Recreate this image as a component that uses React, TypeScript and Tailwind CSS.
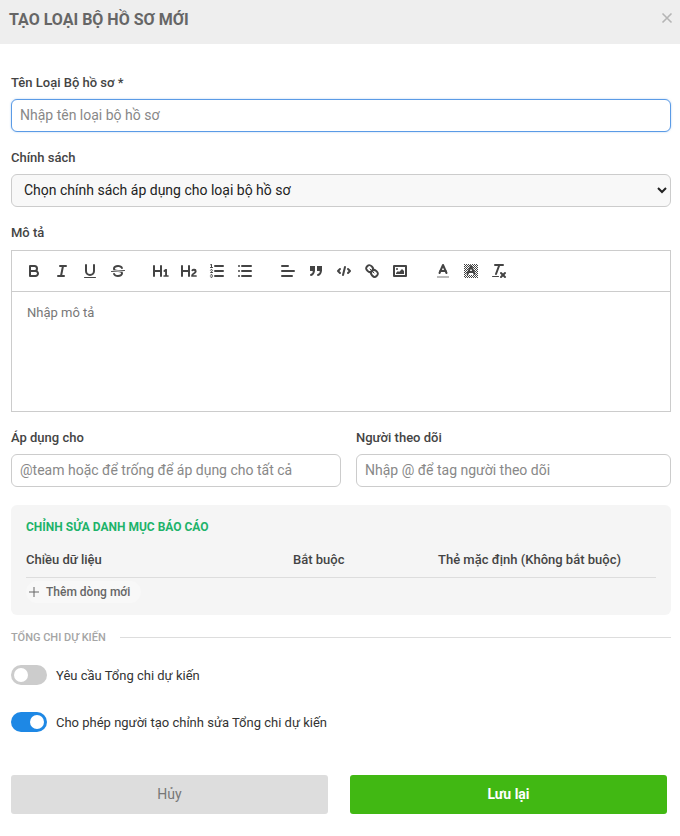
import React from "react";

const S = "none";
const stroke = { fill: "none", stroke: "#444", strokeWidth: 2, strokeLinecap: "round" as const, strokeLinejoin: "round" as const };

function Btn({ children }: { children: React.ReactNode }) {
  return (
    <span className="flex h-6 w-7 items-center justify-center">
      <svg viewBox="0 0 18 18" className="h-[18px] w-[18px]" fill={S}>
        {children}
      </svg>
    </span>
  );
}

function Toolbar() {
  return (
    <div className="flex h-[41px] items-center border-b border-[#ccc] p-2">
      <div className="mr-[15px] flex">
        <Btn>
          <path {...stroke} d="M5,4H9.5A2.5,2.5,0,0,1,12,6.5v0A2.5,2.5,0,0,1,9.5,9H5A0,0,0,0,1,5,9V4A0,0,0,0,1,5,4Z" />
          <path {...stroke} d="M5,9h5.5A2.5,2.5,0,0,1,13,11.5v0A2.5,2.5,0,0,1,10.5,14H5a0,0,0,0,1,0,0V9A0,0,0,0,1,5,9Z" />
        </Btn>
        <Btn>
          <line {...stroke} x1="7" x2="13" y1="4" y2="4" />
          <line {...stroke} x1="5" x2="11" y1="14" y2="14" />
          <line {...stroke} x1="8" x2="10" y1="14" y2="4" />
        </Btn>
        <Btn>
          <path {...stroke} d="M5,3V9a4.012,4.012,0,0,0,4,4H9a4.012,4.012,0,0,0,4-4V3" />
          <rect fill="#444" height="1" rx=".5" ry=".5" width="12" x="3" y="15" />
        </Btn>
        <Btn>
          <line {...stroke} strokeWidth={1} x1="15.5" x2="2.5" y1="8.5" y2="9.5" />
          <path fill="#444" d="M9.007,8C6.542,7.791,6,7.519,6,6.5,6,5.792,7.283,5,9,5c1.571,0,2.765.679,2.969,1.309a1,1,0,0,0,1.9-.617C13.356,4.106,11.354,3,9,3,6.2,3,4,4.538,4,6.5a3.2,3.2,0,0,0,.5,1.843Z" />
          <path fill="#444" d="M8.984,10C11.457,10.208,12,10.479,12,11.5c0,.708-1.283,1.5-3,1.5-1.571,0-2.765-.679-2.969-1.309a1,1,0,1,0-1.9.617C4.644,13.894,6.646,15,9,15c2.8,0,5-1.538,5-3.5a3.2,3.2,0,0,0-.5-1.843Z" />
        </Btn>
      </div>
      <div className="mr-[15px] flex">
        <Btn>
          <path fill="#444" d="M10,4V14a1,1,0,0,1-2,0V10H3v4a1,1,0,0,1-2,0V4A1,1,0,0,1,3,4V8H8V4a1,1,0,0,1,2,0Zm6.06787,9.209H14.98975V7.59863a.54085.54085,0,0,0-.605-.60547h-.62744a1.01119,1.01119,0,0,0-.748.29688L11.645,8.56641a.5435.5435,0,0,0-.022.8584l.28613.30762a.53861.53861,0,0,0,.84717.0332l.09912-.08789a1.2137,1.2137,0,0,0,.2417-.35254h.02246s-.01123.30859-.01123.60547V13.209H12.041a.54085.54085,0,0,0-.605.60547v.43945a.54085.54085,0,0,0,.605.60547h4.02686a.54085.54085,0,0,0,.605-.60547v-.43945A.54085.54085,0,0,0,16.06787,13.209Z" />
        </Btn>
        <Btn>
          <path fill="#444" d="M16.73975,13.81445v.43945a.54085.54085,0,0,1-.605.60547H11.855a.58392.58392,0,0,1-.64893-.60547V14.0127c0-2.90527,3.39941-3.42187,3.39941-4.55469a.77675.77675,0,0,0-.84717-.78125,1.17684,1.17684,0,0,0-.83594.38477c-.2749.26367-.561.374-.85791.13184l-.4292-.34082c-.30811-.24219-.38525-.51758-.1543-.81445a2.97155,2.97155,0,0,1,2.45361-1.17676,2.45393,2.45393,0,0,1,2.68408,2.40918c0,2.45312-3.1792,2.92676-3.27832,3.93848h2.79443A.54085.54085,0,0,1,16.73975,13.81445ZM9,3A.99974.99974,0,0,0,8,4V8H3V4A1,1,0,0,0,1,4V14a1,1,0,0,0,2,0V10H8v4a1,1,0,0,0,2,0V4A.99974.99974,0,0,0,9,3Z" />
        </Btn>
        <Btn>
          <line {...stroke} x1="7" x2="15" y1="4" y2="4" />
          <line {...stroke} x1="7" x2="15" y1="9" y2="9" />
          <line {...stroke} x1="7" x2="15" y1="14" y2="14" />
          <line {...stroke} strokeWidth={1} x1="2.5" x2="4.5" y1="5.5" y2="5.5" />
          <path fill="#444" d="M3.5,6A0.5,0.5,0,0,1,3,5.5V3.085l-0.276.138A0.5,0.5,0,0,1,2.053,3c-0.124-.247-0.023-0.324.224-0.447l1-.5A0.5,0.5,0,0,1,4,2.5v3A0.5,0.5,0,0,1,3.5,6Z" />
          <path {...stroke} strokeWidth={1} d="M4.5,10.5h-2c0-.234,1.85-1.076,1.85-2.234A0.959,0.959,0,0,0,2.5,8.156" />
          <path {...stroke} strokeWidth={1} d="M2.5,14.846a0.959,0.959,0,0,0,1.85-.109A0.7,0.7,0,0,0,3.75,14a0.688,0.688,0,0,0,.6-0.736,0.959,0.959,0,0,0-1.85-.109" />
        </Btn>
        <Btn>
          <line {...stroke} x1="6" x2="15" y1="4" y2="4" />
          <line {...stroke} x1="6" x2="15" y1="9" y2="9" />
          <line {...stroke} x1="6" x2="15" y1="14" y2="14" />
          <line {...stroke} x1="3" x2="3" y1="4" y2="4" />
          <line {...stroke} x1="3" x2="3" y1="9" y2="9" />
          <line {...stroke} x1="3" x2="3" y1="14" y2="14" />
        </Btn>
      </div>
      <div className="mr-[15px] flex">
        <Btn>
          <line {...stroke} x1="3" x2="15" y1="9" y2="9" />
          <line {...stroke} x1="3" x2="13" y1="14" y2="14" />
          <line {...stroke} x1="3" x2="9" y1="4" y2="4" />
        </Btn>
        <Btn>
          <rect fill="#444" stroke="#444" strokeWidth={2} height="3" width="3" x="4" y="5" />
          <rect fill="#444" stroke="#444" strokeWidth={2} height="3" width="3" x="11" y="5" />
          <path {...stroke} d="M7,8c0,4.031-3,5-3,5" />
          <path {...stroke} d="M14,8c0,4.031-3,5-3,5" />
        </Btn>
        <Btn>
          <polyline {...stroke} points="5 7 3 9 5 11" />
          <polyline {...stroke} points="13 7 15 9 13 11" />
          <line {...stroke} x1="10" x2="8" y1="5" y2="13" />
        </Btn>
        <Btn>
          <line {...stroke} strokeWidth={1} x1="7" x2="11" y1="7" y2="11" />
          <path {...stroke} d="M8.9,4.577a3.476,3.476,0,0,1,.36,4.679A3.476,3.476,0,0,1,4.577,8.9C3.185,7.5,2.035,6.4,4.217,4.217S7.5,3.185,8.9,4.577Z" />
          <path {...stroke} d="M13.423,9.1a3.476,3.476,0,0,0-4.679-.36,3.476,3.476,0,0,0,.36,4.679c1.392,1.392,2.5,2.542,4.679.36S14.815,10.5,13.423,9.1Z" />
        </Btn>
        <Btn>
          <rect {...stroke} height="10" width="12" x="3" y="4" />
          <circle fill="#444" cx="6" cy="7" r="1" />
          <polyline fill="#444" points="5 12 5 11 7 9 8 10 11 7 13 9 13 12 5 12" />
        </Btn>
      </div>
      <div className="flex">
        <Btn>
          <line stroke="#bbb" strokeWidth={2} x1="3" x2="15" y1="15" y2="15" />
          <polyline {...stroke} points="5.5 11 9 3 12.5 11" />
          <line {...stroke} x1="11.63" x2="6.38" y1="9" y2="9" />
        </Btn>
        <Btn>
          <defs>
            <pattern id="hatch" width="2" height="2" patternUnits="userSpaceOnUse">
              <rect width="1" height="1" fill="#444" />
              <rect x="1" y="1" width="1" height="1" fill="#444" />
            </pattern>
          </defs>
          <rect x="2" y="2" width="14" height="14" fill="url(#hatch)" />
          <polygon fill="#fff" points="9 2 4 13 14 13" />
          <polyline {...stroke} points="5.5 12 9 4 12.5 12" />
          <line {...stroke} x1="11.63" x2="6.38" y1="10" y2="10" />
        </Btn>
        <Btn>
          <line {...stroke} x1="5" x2="13" y1="3" y2="3" />
          <line {...stroke} x1="6" x2="9.35" y1="12" y2="3" />
          <line {...stroke} x1="11" x2="15" y1="11" y2="15" />
          <line {...stroke} x1="15" x2="11" y1="11" y2="15" />
          <rect fill="#444" height="1" rx=".5" ry=".5" width="7" x="2" y="14" />
        </Btn>
      </div>
    </div>
  );
}

function Toggle({ on, label }: { on: boolean; label: string }) {
  return (
    <div className="flex h-5 items-center">
      <span className={on ? "flex h-5 w-9 items-center justify-end rounded-full bg-[#1e88e5] pr-[3px]" : "flex h-5 w-9 items-center justify-start rounded-full bg-[#ccc] pl-[3px]"}>
        <span className="h-[14px] w-[14px] rounded-full bg-white" />
      </span>
      <span className="ml-[9px] pt-[2px] text-[13px] text-[#333]">{label}</span>
    </div>
  );
}

const inputCls = "block h-[33px] w-full rounded-md border border-[#ccc] bg-white px-2 pb-[2px] text-sm text-[#333] outline-none placeholder:text-[#888]";
const labelCls = "block text-[13px] leading-4 font-medium text-[#444]";

export default function App() {
  return (
    <div className="h-[836px] w-[680px] overflow-hidden bg-white font-['Roboto',sans-serif]">
      <div className="flex h-11 items-start justify-between bg-[#eee] pl-[9px] pr-[7px]">
        <h1 className="mt-[10px] text-base leading-5 font-bold text-[#666]">TẠO LOẠI BỘ HỒ SƠ MỚI</h1>
        <svg viewBox="0 0 12 12" className="mt-[12px] h-3 w-3" fill="none" stroke="#b5b5b5" strokeWidth="1.6">
          <path d="M1.5 1.5l9 9M10.5 1.5l-9 9" />
        </svg>
      </div>

      <div className="px-[11px] pr-[9px]">
        <label className={`${labelCls} mt-[31px]`}>Tên Loại Bộ hồ sơ *</label>
        <input
          className="mt-[8px] block h-[33px] w-full rounded-md border border-[#5b9be6] bg-white px-2 pb-[2px] text-sm text-[#333] shadow-[0_0_2px_rgba(91,155,230,0.5)] outline-none placeholder:text-[#888]"
          placeholder="Nhập tên loại bộ hồ sơ"
        />

        <label className={`${labelCls} mt-[18px]`}>Chính sách</label>
        <select className="mt-[8px] block h-[33px] w-full rounded-md border border-[#ccc] bg-[#f8f8f8] px-2 pb-[2px] text-sm text-[#222] outline-none">
          <option>Chọn chính sách áp dụng cho loại bộ hồ sơ</option>
        </select>

        <label className={`${labelCls} mt-[18px]`}>Mô tả</label>
        <div className="mt-[9px] h-[162px] border border-[#ccc]">
          <Toolbar />
          <div className="px-[15px] py-3 text-[13px] leading-[18px] text-[#777]">Nhập mô tả</div>
        </div>

        <div className="mt-[18px] flex gap-[15px]">
          <div className="w-[330px]">
            <label className={labelCls}>Áp dụng cho</label>
            <input className={`${inputCls} mt-[8px]`} placeholder="@team hoặc để trống để áp dụng cho tất cả" />
          </div>
          <div className="flex-1">
            <label className={labelCls}>Người theo dõi</label>
            <input className={`${inputCls} mt-[8px]`} placeholder="Nhập @ để tag người theo dõi" />
          </div>
        </div>

        <div className="mt-[18px] h-[110px] rounded-md bg-[#f5f5f5] px-[15px] pt-[14px]">
          <div className="text-xs leading-4 font-bold text-[#1db36a]">CHỈNH SỬA DANH MỤC BÁO CÁO</div>
          <div className="mt-[15px] flex h-[28px] items-center border-b border-[#ddd] pb-[7px] text-[13px] font-medium text-[#444]">
            <span className="w-[267px]">Chiều dữ liệu</span>
            <span className="w-[145px]">Bắt buộc</span>
            <span>Thẻ mặc định (Không bắt buộc)</span>
          </div>
          <button className="mt-[3px] flex h-[22px] items-center gap-[7px] rounded-full bg-[#f8f8f8] pr-[11px] pl-[3px] text-xs font-medium text-[#666]">
            <svg viewBox="0 0 10 10" className="h-[10px] w-[10px]" fill="none" stroke="#666" strokeWidth="1">
              <path d="M5 0v10M0 5h10" />
            </svg>
            Thêm dòng mới
          </button>
        </div>

        <div className="mt-[14px] flex h-4 items-center gap-[14px]">
          <span className="pt-[2px] text-[11px] font-medium text-[#a5a5a5]">TỔNG CHI DỰ KIẾN</span>
          <span className="h-px flex-1 bg-[#ddd]" />
        </div>

        <div className="mt-5">
          <Toggle on={false} label="Yêu cầu Tổng chi dự kiến" />
        </div>
        <div className="mt-[27px]">
          <Toggle on label="Cho phép người tạo chỉnh sửa Tổng chi dự kiến" />
        </div>

        <div className="mt-[43px] flex gap-[22px] pr-1">
          <button className="h-[39px] w-[317px] rounded-[3px] bg-[#ddd] pb-[2px] text-sm font-normal text-[#777]">Hủy</button>
          <button className="h-[39px] w-[317px] rounded-[3px] bg-[#41b813] pb-[2px] text-sm font-bold text-white">Lưu lại</button>
        </div>
      </div>
    </div>
  );
}
